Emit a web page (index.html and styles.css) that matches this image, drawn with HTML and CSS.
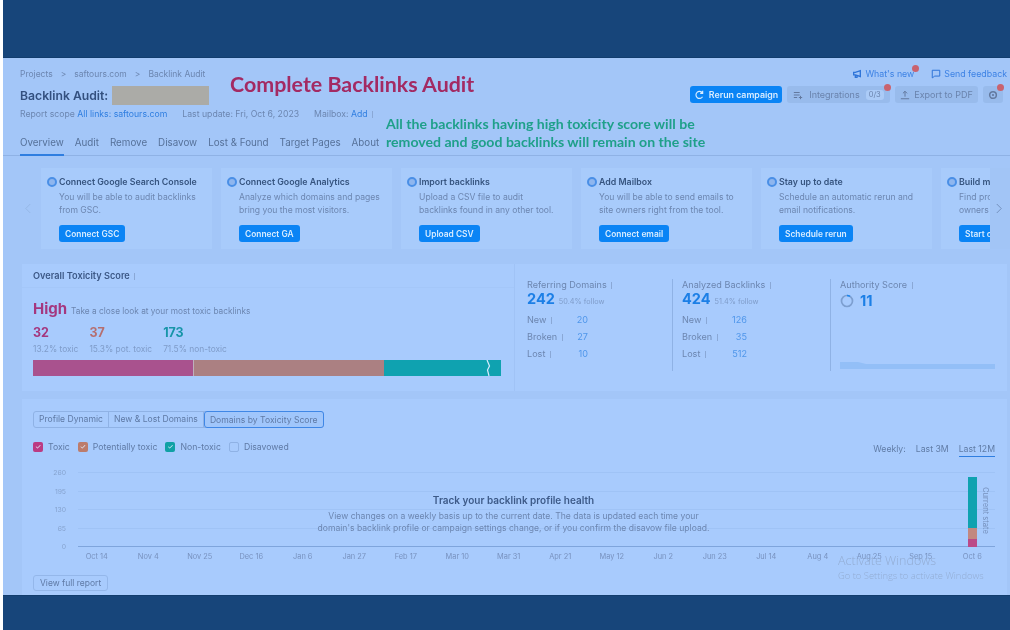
FILE: index.html
```html
<!DOCTYPE html>
<html lang="en">
<head>
<meta charset="utf-8">
<title>Backlink Audit</title>
<link rel="stylesheet" href="styles.css">
</head>
<body>
<div class="band"></div>
<main class="page">
  <header class="head">
    <div class="head-top">
      <div class="head-left">
        <div class="crumbs"><span>Projects</span><i>&gt;</i><span>saftours.com</span><i>&gt;</i><span>Backlink Audit</span></div>
        <div class="title-row"><h1>Backlink Audit:</h1><span class="redact"></span></div>
        <div class="scope"><span>Report scope <a>All links: saftours.com</a></span><span>Last update: Fri, Oct 6, 2023</span><span>Mailbox: <a>Add</a> <b class="info"></b></span></div>
      </div>
      <div class="head-right">
        <div class="links">
          <a class="link dot-host"><svg class="ico" viewBox="0 0 12 12"><path d="M10 2v7L4 7H2V4h2zM4 7v3h2V7.6" fill="none" stroke="#2f74d8" stroke-width="1.6"/></svg>What's new<em class="dot dot-a"></em></a>
          <a class="link"><svg class="ico" viewBox="0 0 12 12"><path d="M1.5 1.5h9v7h-6l-3 2.2z" fill="none" stroke="#2f74d8" stroke-width="1.2"/></svg>Send feedback</a>
        </div>
        <div class="actions">
          <button class="btn primary rerun"><svg class="ico" viewBox="0 0 12 12"><path d="M10 3.5A4.2 4.2 0 1 0 10.2 8M10.4 1v3H7.4" fill="none" stroke="#d8ecff" stroke-width="1.4"/></svg>Rerun campaign</button>
          <button class="btn ghost integ"><svg class="ico" viewBox="0 0 12 12"><path d="M1 3h7M1 6h7M1 9h4M9 7v4M7 9h4" fill="none" stroke="#63799f" stroke-width="1.2"/></svg>Integrations<span class="count">0/3</span><em class="dot dot-b"></em></button>
          <button class="btn ghost export"><svg class="ico" viewBox="0 0 12 12"><path d="M6 8V1.5M3.5 4 6 1.5 8.500 4M1 10.500h10" fill="none" stroke="#63799f" stroke-width="1.2"/></svg>Export to PDF</button>
          <button class="btn ghost gear"><svg class="ico" viewBox="0 0 12 12"><circle cx="6" cy="6" r="4" fill="none" stroke="#63799f" stroke-width="1.8"/><circle cx="6" cy="6" r="1.300" fill="#63799f"/></svg><em class="dot dot-c"></em></button>
        </div>
      </div>
    </div>
    <nav class="tabs"><a class="on">Overview</a><a>Audit</a><a>Remove</a><a>Disavow</a><a>Lost &amp; Found</a><a>Target Pages</a><a>About</a></nav>
    <div class="promo">Complete Backlinks Audit</div>
    <div class="note">All the backlinks having high toxicity score will be<br>removed and good backlinks will remain on the site</div>
  </header>

  <section class="carousel">
    <span class="chev chev-l"><svg viewBox="0 0 8 14"><path d="M7 1 1 7l6 6" fill="none" stroke="#93b5e4" stroke-width="1.2"/></svg></span>
    <article class="card"><h3><b class="ring"></b>Connect Google Search Console</h3><p>You will be able to audit backlinks<br>from GSC.</p><button class="btn primary">Connect GSC</button></article>
    <article class="card"><h3><b class="ring"></b>Connect Google Analytics</h3><p>Analyze which domains and pages<br>bring you the most visitors.</p><button class="btn primary">Connect GA</button></article>
    <article class="card"><h3><b class="ring"></b>Import backlinks</h3><p>Upload a CSV file to audit<br>backlinks found in any other tool.</p><button class="btn primary">Upload CSV</button></article>
    <article class="card"><h3><b class="ring"></b>Add Mailbox</h3><p>You will be able to send emails to<br>site owners right from the tool.</p><button class="btn primary">Connect email</button></article>
    <article class="card"><h3><b class="ring"></b>Stay up to date</h3><p>Schedule an automatic rerun and<br>email notifications.</p><button class="btn primary">Schedule rerun</button></article>
    <article class="card"><h3><b class="ring"></b>Build my list</h3><p>Find prospects and<br>owners from the tool.</p><button class="btn primary">Start outreach</button></article>
    <div class="fade"><svg viewBox="0 0 8 14"><path d="m1 1 6 6-6 6" fill="none" stroke="#6f8cb8" stroke-width="1.2"/></svg></div>
  </section>

  <section class="summary panel">
    <div class="tox">
      <h2 class="tox-head">Overall Toxicity Score <b class="info"></b></h2>
      <div class="tox-body">
        <div class="level"><strong>High</strong><span>Take a close look at your most toxic backlinks</span></div>
        <div class="tox-nums">
          <div><b class="c-pink">32</b><span>13.2% toxic</span></div>
          <div><b class="c-tan">37</b><span>15.3% pot. toxic</span></div>
          <div><b class="c-teal">173</b><span>71.5% non-toxic</span></div>
        </div>
        <div class="bar"><i class="seg-pink"></i><i class="seg-tan"></i><i class="seg-teal"><svg class="snap" viewBox="0 0 6 16"><path d="M2 0 4.500 6 2.500 10 4 16" fill="none" stroke="#d8ecff" stroke-width="1.2"/></svg></i></div>
      </div>
    </div>
    <div class="stats">
      <div class="stat s1">
        <div class="stat-h">Referring Domains <b class="info"></b></div>
        <div class="big"><strong>242</strong><span>50.4% follow</span></div>
        <dl><dt>New <b class="info"></b></dt><dd>20</dd><dt>Broken <b class="info"></b></dt><dd>27</dd><dt>Lost <b class="info"></b></dt><dd>10</dd></dl>
      </div>
      <div class="stat s2">
        <div class="stat-h">Analyzed Backlinks <b class="info"></b></div>
        <div class="big"><strong>424</strong><span>51.4% follow</span></div>
        <dl><dt>New <b class="info"></b></dt><dd>126</dd><dt>Broken <b class="info"></b></dt><dd>35</dd><dt>Lost <b class="info"></b></dt><dd>512</dd></dl>
      </div>
      <div class="stat s3">
        <div class="stat-h">Authority Score <b class="info"></b></div>
        <div class="big auth"><svg class="gauge" viewBox="0 0 14 14"><circle cx="7" cy="7" r="5.500" fill="none" stroke="#7d9fd0" stroke-width="1.700"/><path d="M7 1.500A5.500 5.500 0 0 1 10 2.400" fill="none" stroke="#1c86ee" stroke-width="1.700"/></svg><strong>11</strong></div>
        <svg class="spark" viewBox="0 0 155 10" preserveAspectRatio="none"><path d="M0 0H18L26 3H155V10H0z" fill="#93bff7"/></svg>
      </div>
    </div>
  </section>

  <section class="chart panel">
    <div class="seg"><span>Profile Dynamic</span><span>New &amp; Lost Domains</span><span class="active">Domains by Toxicity Score</span></div>
    <div class="legend-row">
      <div class="legend">
        <label><i class="box b-pink">✓</i>Toxic</label>
        <label><i class="box b-tan">✓</i>Potentially toxic</label>
        <label><i class="box b-teal">✓</i>Non-toxic</label>
        <label><i class="box b-none"></i>Disavowed</label>
      </div>
      <div class="range"><span>Weekly:</span><a>Last 3M</a><a class="on">Last 12M</a></div>
    </div>
    <div class="plot">
      <div class="axis"><span>260</span><span>195</span><span>130</span><span>65</span><span>0</span></div>
      <div class="grid">
        <i></i><i></i><i></i><i></i><i class="base"></i>
        <div class="empty"><h4>Track your backlink profile health</h4><p>View changes on a weekly basis up to the current date. The data is updated each time your<br>domain's backlink profile or campaign settings change, or if you confirm the disavow file upload.</p></div>
        <div class="stack"><i class="seg-teal"></i><i class="seg-tan"></i><i class="seg-pink"></i></div>
        <div class="current">Current state</div>
      </div>
    </div>
    <div class="dates"><span>Oct 14</span><span>Nov 4</span><span>Nov 25</span><span>Dec 16</span><span>Jan 6</span><span>Jan 27</span><span>Feb 17</span><span>Mar 10</span><span>Mar 31</span><span>Apr 21</span><span>May 12</span><span>Jun 2</span><span>Jun 23</span><span>Jul 14</span><span>Aug 4</span><span>Aug 25</span><span>Sep 15</span><span>Oct 6</span></div>
    <button class="btn outline">View full report</button>
    <div class="activate"><div>Activate Windows</div><small>Go to Settings to activate Windows</small></div>
  </section>
</main>
<div class="band band-b"></div>
</body>
</html>
```

FILE: styles.css
```css
* { box-sizing: border-box; }
html, body { margin: 0; height: 630px; overflow: hidden; }
body { background: #fff; padding-left: 3px; font-family: Inter, "Liberation Sans", sans-serif; color: #5f7aa5; display: flex; flex-direction: column; }
.band { height: 58px; background: #17457a; border-bottom: 1px solid #123d6e; flex: none; }
.band-b { height: 35px; border-bottom: 0; border-top: 1px solid #123d6e; }
.page { height: 537px; flex: none; background: #a3c6f8; overflow: hidden; filter: blur(.6px); }
h1, h2, h3, h4, p, dl, dd { margin: 0; }
a { color: inherit; }
button { font: inherit; border: 0; }

/* Header */
.head { position: relative; height: 98px; padding: 10px 3px 0 17px; border-bottom: 1px solid #8fb2e5; }
.head-top { display: flex; justify-content: space-between; height: 68px; }
.crumbs { display: flex; gap: 8px; font-size: 8.500px; line-height: 12px; color: #6c86b0; }
.crumbs i { font-style: normal; }
.title-row { display: flex; align-items: center; gap: 4px; margin-top: 6px; height: 19px; }
h1 { font-size: 12.200px; font-weight: 600; color: #33507f; white-space: nowrap; }
.redact { width: 97px; height: 19px; background: #ababa7; }
.scope { display: flex; gap: 15px; margin-top: 3px; font-size: 8.700px; line-height: 12px; color: #6c86b0; }
.scope a { color: #2f7ee0; }
.info { display: inline-block; width: 3px; height: 7px; margin-left: 2px; border-left: 1px solid #8aa8d6; vertical-align: -1px; }
.head-right { display: flex; flex-direction: column; align-items: flex-end; }
.links { display: flex; gap: 17px; font-size: 8.800px; line-height: 12px; color: #3d82e4; }
.link { position: relative; display: flex; align-items: center; gap: 3px; }
.ico { width: 10px; height: 10px; flex: none; }
.actions { display: flex; gap: 5px; margin-top: 6px; padding-right: 4px; }
.btn { position: relative; display: inline-flex; align-items: center; justify-content: center; height: 17px; border-radius: 3px; font-size: 9px; white-space: nowrap; }
.primary { background: #0a84f5; color: #d8ecff; font-weight: 500; }
.ghost { background: #98bbec; color: #6a83ac; }
.rerun { width: 92px; gap: 5px; font-weight: 600; font-size: 8.800px; }
.integ { width: 103px; gap: 6px; }
.export { width: 83px; gap: 4px; }
.gear { width: 20px; }
.count { padding: 0 3px; background: #abcbf7; border-radius: 3px; font-size: 7.500px; line-height: 10px; }
.dot { position: absolute; width: 7px; height: 7px; border-radius: 50%; background: #c9636f; }
.dot-a { right: -5px; top: -3px; }
.dot-b { right: -1px; top: -2px; }
.dot-c { right: -1px; top: -2px; }
.tabs { display: flex; gap: 11px; font-size: 9.800px; line-height: 12px; color: #567199; height: 20px; }
.tabs a { height: 20px; padding-top: 1px; }
.tabs .on { border-bottom: 2px solid #2f7ee0; }
.promo { position: absolute; left: 227px; top: 14px; font-family: Lato, sans-serif; font-size: 21.400px; font-weight: 700; line-height: 25px; color: #a32a63; }
.note { position: absolute; left: 383px; top: 57px; font-family: Lato, sans-serif; font-size: 14.100px; font-weight: 700; line-height: 18px; color: #1fa08a; white-space: nowrap; }

/* Carousel */
.carousel { position: relative; display: flex; gap: 9px; height: 81px; margin-top: 12px; padding-left: 38px; overflow: hidden; }
.card { flex: none; width: 171px; height: 81px; padding: 8px 0 0 18px; background: #a8cbfb; }
.card h3 { position: relative; font-size: 8.800px; font-weight: 600; line-height: 12px; color: #36547f; white-space: nowrap; }
.ring { position: absolute; left: -12px; top: 1px; width: 10px; height: 10px; border-radius: 50%; border: 2px solid #4a8fe6; background: #8fb6ee; }
.card p { margin-top: 3px; font-size: 8.600px; line-height: 12.500px; color: #6c86b0; white-space: nowrap; }
.card .btn { height: 17px; padding: 0 6px; margin-top: 9px; font-size: 8.400px; font-weight: 600; }
.chev { position: absolute; left: 22px; top: 35px; width: 6px; height: 11px; }
.chev svg, .fade svg { display: block; width: 100%; height: 100%; }
.fade { position: absolute; right: 0; top: 0; bottom: 0; width: 20px; background: #a2c5f6; padding: 35px 8px 35px 6px; }

/* Panels */
.panel { background: #a8cbfd; margin: 0 3px 0 19px; }
.summary { display: flex; height: 127px; margin-top: 15px; }
.tox { width: 493px; border-right: 1px solid #a0c3f6; }
.tox-head { height: 24px; padding: 5px 0 0 11px; font-size: 9.200px; line-height: 14px; font-weight: 600; color: #3c5886; border-bottom: 1px solid #a4c7f9; }
.tox-body { padding: 11px 11px 0; }
.level { display: flex; align-items: baseline; gap: 4px; line-height: 20px; }
.level strong { font-size: 15px; font-weight: 700; color: #a4377f; }
.level span { font-size: 8.300px; color: #6c86b0; }
.tox-nums { display: flex; gap: 11px; margin-top: 4px; }
.tox-nums div { display: flex; flex-direction: column; }
.tox-nums b { font-size: 12.500px; line-height: 15px; font-weight: 700; }
.tox-nums span { margin-top: 3px; font-size: 8.400px; line-height: 12px; color: #7f9cc9; }
.c-pink { color: #a4377f; }
.c-tan { color: #b56f70; }
.c-teal { color: #1795a8; }
.bar { display: flex; height: 16px; margin-top: 5px; width: 468px; }
.bar i { display: block; position: relative; }
.bar .seg-pink { width: 160px; }
.bar .seg-tan { width: 191px; border-left: 1px solid #bdb0bd; }
.bar .seg-teal { flex: 1; }
.seg-pink { background: #a9528e; }
.seg-tan { background: #ab8082; }
.seg-teal { background: #0fa2b0; }
.snap { position: absolute; right: 10px; top: 0; width: 6px; height: 16px; }

.stats { flex: 1; display: flex; padding-top: 15px; font-size: 9.100px; color: #6c86b0; }
.stat { position: relative; padding-left: 12px; height: 92px; }
.s1 { width: 157px; }
.s2 { width: 158px; border-left: 1px solid #8fb2e5; padding-left: 9px; }
.s3 { flex: 1; border-left: 1px solid #8fb2e5; padding-left: 9px; }
.stat-h { line-height: 12px; white-space: nowrap; }
.big { display: flex; align-items: baseline; gap: 4px; height: 17px; margin-top: -1px; }
.big strong { font-size: 14.500px; line-height: 17px; font-weight: 700; color: #1c7fe6; }
.big span { font-size: 7.300px; color: #7f9cc9; }
.auth { align-items: center; gap: 6px; margin-top: 1px; }
.gauge { width: 14px; height: 14px; }
.stat dl { display: grid; grid-template-columns: 44px 17px; row-gap: 5px; margin-top: 7px; line-height: 12px; }
.s2 dl { grid-template-columns: 45px 20px; }
.stat dt { white-space: nowrap; }
.stat dd { text-align: right; color: #4f96ea; }
.spark { position: absolute; left: 9px; bottom: 2px; width: 155px; height: 7px; }

.chart { position: relative; height: 197px; margin-top: 8px; padding: 12px 0 0 11px; }
.seg { display: flex; width: fit-content; height: 17px; font-size: 8.600px; line-height: 15px; color: #5f7aa5; border: 1px solid #8fb2e5; border-radius: 3px; }
.seg span { padding: 0 5px; border-right: 1px solid #8fb2e5; white-space: nowrap; }
.seg .active { margin: -1px -1px -1px 0; padding-top: 1px; border: 1px solid #3f87e6; border-radius: 3px; background: #a0c6fb; }
.legend-row { display: flex; justify-content: space-between; align-items: center; height: 14px; margin-top: 12px; padding-right: 12px; font-size: 8.700px; }
.legend { display: flex; gap: 8px; }
.legend label { display: flex; align-items: center; gap: 5px; white-space: nowrap; }
.box { display: block; width: 10px; height: 10px; border-radius: 2px; font-size: 7px; line-height: 10px; text-align: center; font-style: normal; color: #e2eefe; }
.b-pink { background: #bb3b83; }
.b-tan { background: #bc7c6c; }
.b-teal { background: #10a1a5; }
.b-none { border: 1px solid #8fb2e5; }
.range { display: flex; gap: 10px; margin-top: 4px; color: #607ca6; }
.range a { position: relative; }
.range .on::after { content: ""; position: absolute; left: 0; right: 0; bottom: -3px; height: 1px; background: #2f7ee0; }
.plot { display: flex; height: 75px; margin-top: 18px; }
.axis { width: 45px; display: flex; flex-direction: column; justify-content: space-between; align-items: flex-end; padding-right: 12px; margin-top: -3px; margin-bottom: -3px; font-size: 6.800px; line-height: 7px; color: #86a3cf; }
.grid { position: relative; width: 917px; display: flex; flex-direction: column; justify-content: space-between; }
.grid > i { display: block; height: 1px; background: #9fc3f6; }
.grid > .base { background: #7fa5dc; }
.empty { position: absolute; left: 0; right: 0; top: 22px; text-align: center; padding-right: 46px; }
.empty h4 { font-size: 10px; line-height: 12px; font-weight: 600; color: #3d5a88; }
.empty p { margin-top: 4px; font-size: 8.600px; line-height: 12px; color: #6c86b0; white-space: nowrap; }
.stack { position: absolute; right: 18px; top: 5px; bottom: 0; width: 9px; display: flex; flex-direction: column; }
.stack .seg-teal { flex: 1; }
.stack .seg-tan { height: 11px; background: #c28880; }
.stack .seg-pink { height: 8px; background: #bb4a88; }
.current { position: absolute; right: 6px; top: 15px; writing-mode: vertical-rl; font-size: 7.600px; line-height: 8px; color: #7691bd; white-space: nowrap; }
.dates { display: flex; margin: 5px 0 0 38px; width: 927px; font-size: 7.400px; line-height: 10px; color: #7892bf; }
.dates span { flex: 1; text-align: center; white-space: nowrap; }
.outline { height: 16px; margin-top: 13px; padding: 0 6px; background: transparent; border: 1px solid #94b7ea; font-size: 8.500px; color: #5f7aa5; }
.activate { position: absolute; left: 816px; top: 154px; color: #93add4; font-family: "Open Sans", sans-serif; line-height: 1; white-space: nowrap; font-weight: 300; }
.activate div { font-size: 12.500px; line-height: 15px; }
.activate small { display: block; margin-top: 3px; font-size: 9.400px; }
```
